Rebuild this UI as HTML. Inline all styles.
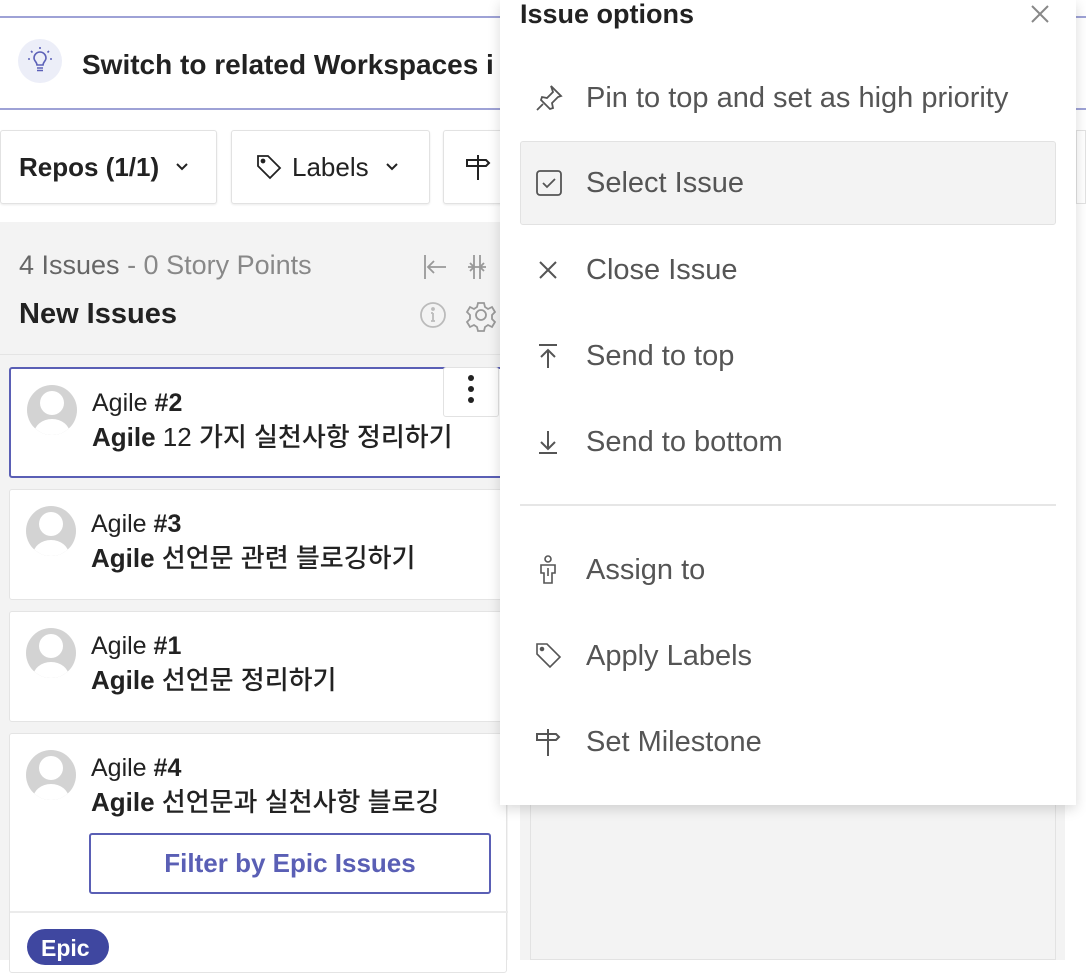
<!DOCTYPE html>
<html><head><meta charset="utf-8"><style>
*{box-sizing:border-box;margin:0;padding:0}
body{width:1086px;height:960px;overflow:hidden;background:#fff;font-family:"Liberation Sans","Noto Sans CJK KR",sans-serif;position:relative;color:#222}
.abs{position:absolute}
.banner{left:0;top:16px;width:1086px;height:94px;border-top:2px solid #9ea2d6;border-bottom:2px solid #9ea2d6;background:#fff}
.btn{top:130px;height:74px;background:#fff;border:1px solid #e2e2e2;border-radius:3px;box-shadow:0 1px 2px rgba(0,0,0,.08);font-size:26px;display:flex;align-items:center}
.col{left:0;top:222px;width:508px;height:738px;background:#f3f3f3}
.card{left:9px;width:498px;background:#fff;border:1px solid #e4e4e4;border-radius:3px}
.av{position:absolute;left:16px;top:16px;width:50px;height:50px;border-radius:50%;background:#d3d3d3;overflow:hidden}
.av:before{content:"";position:absolute;left:13px;top:6px;width:24px;height:24px;border-radius:50%;background:#fff;box-shadow:0 0 0 2px #d3d3d3}
.av:after{content:"";position:absolute;left:7px;top:34px;width:36px;height:30px;border-radius:50%;background:#fff}
.k{position:absolute;left:81px;top:18px;font-size:25px;color:#222;line-height:32px}
.t{position:absolute;left:81px;top:52px;font-size:26px;font-weight:500;color:#222;line-height:32px;white-space:nowrap}
.t b{font-weight:bold}
.menu{left:500px;top:0;width:576px;height:805px;background:#fff;box-shadow:0 4px 12px rgba(0,0,0,.15)}
.mi{position:absolute;left:20px;width:536px;height:84px;font-size:29px;color:#555;display:flex;align-items:center}
.mi svg{position:absolute;left:14px}
.mi span{position:absolute;left:66px}
</style></head><body>
<div class="abs banner">
 <div class="abs" style="left:18px;top:21px;width:44px;height:44px;border-radius:50%;background:#eceef8"></div>
 <svg class="abs" style="left:18px;top:21px" width="44" height="44" viewBox="0 0 44 44" fill="none" stroke="#5c61b8" stroke-width="1.6"><path d="M16 19a6 6 0 1 1 12 0c0 3-3 4-3 7h-6c0-3-3-4-3-7z"/><path d="M19 29h6M19 31.5h6"/><path d="M22 8v2M13 12l1.5 1.5M31 12l-1.5 1.5M10 20h2M32 20h2"/></svg>
 <div class="abs" style="left:82px;top:31px;font-size:28px;font-weight:bold;color:#222;white-space:nowrap">Switch to related Workspaces i</div>
</div>
<div class="abs btn" style="left:0;width:217px;padding-left:18px;font-weight:bold">Repos (1/1)<svg style="margin-left:16px" width="14" height="10" viewBox="0 0 14 10"><path d="M2 2l5 5 5-5" stroke="#222" stroke-width="2" fill="none"/></svg></div>
<div class="abs btn" style="left:231px;width:199px;padding-left:22px"><svg width="30" height="30" viewBox="0 0 30 30" fill="none" stroke="#222" stroke-width="1.8"><path d="M4 4h10l12 12-10 10L4 14z"/><circle cx="9" cy="9" r="1.5" fill="#222"/></svg><span style="margin-left:8px">Labels</span><svg style="margin-left:16px" width="14" height="10" viewBox="0 0 14 10"><path d="M2 2l5 5 5-5" stroke="#222" stroke-width="2" fill="none"/></svg></div>
<div class="abs btn" style="left:443px;width:80px;padding-left:20px"><svg width="30" height="30" viewBox="0 0 30 30" fill="none" stroke="#222" stroke-width="2"><path d="M14 3v25M3 8h19l3 3-3 3H3z"/></svg></div>
<div class="abs col">
 <div class="abs" style="left:19px;top:28px;font-size:27px;color:#888;white-space:nowrap"><span style="color:#666">4 Issues</span> - 0 Story Points</div>
 <div class="abs" style="left:19px;top:76px;font-size:29px;font-weight:bold;color:#222">New Issues</div>
 <svg class="abs" style="left:420px;top:30px" width="80" height="30" viewBox="0 0 80 30" fill="none" stroke="#999" stroke-width="1.8"><path d="M5 3v24M8 15h18M14 9l-6 6 6 6"/><path d="M54 3v24M60 3v24M48 15h18M50 11l4 4-4 4M64 11l-4 4 4 4"/></svg>
 <svg class="abs" style="left:418px;top:78px" width="90" height="32" viewBox="0 0 90 32" fill="none" stroke="#bbb" stroke-width="1.8"><circle cx="15" cy="15" r="12"/><path d="M15 13v8M13 21h4M13 13h2" stroke="#bbb"/><circle cx="15" cy="9" r="1" fill="#bbb"/><circle cx="63" cy="15" r="5" stroke="#999"/><path stroke="#999" d="M60 3h6l1 4 3 2 4-2 3 5-3 3v4l3 3-3 5-4-2-3 2-1 4h-6l-1-4-3-2-4 2-3-5 3-3v-4l-3-3 3-5 4 2 3-2z"/></svg>
 <div class="abs" style="left:0;top:132px;width:508px;height:1px;background:#e4e4e4"></div>
</div>
<div class="abs card" style="top:367px;height:111px;border:2px solid #5a5fb5"><div class="av"></div><div class="k">Agile <b>#2</b></div><div class="t"><b>Agile</b> 12 가지 실천사항 정리하기</div>
 <div class="abs" style="left:432px;top:-2px;width:56px;height:50px;background:#fff;border:1px solid #e2e2e2;border-radius:3px"><div class="abs" style="left:24px;top:7px;width:6px;height:6px;border-radius:50%;background:#222;box-shadow:0 11px 0 #222,0 22px 0 #222"></div></div></div>
<div class="abs card" style="top:489px;height:111px"><div class="av"></div><div class="k">Agile <b>#3</b></div><div class="t"><b>Agile</b> 선언문 관련 블로깅하기</div></div>
<div class="abs card" style="top:611px;height:111px"><div class="av"></div><div class="k">Agile <b>#1</b></div><div class="t"><b>Agile</b> 선언문 정리하기</div></div>
<div class="abs card" style="top:733px;height:240px"><div class="av"></div><div class="k">Agile <b>#4</b></div><div class="t"><b>Agile</b> 선언문과 실천사항 블로깅</div>
 <div class="abs" style="left:79px;top:99px;width:402px;height:61px;border:2px solid #5a5fb5;border-radius:3px;color:#5a5fb5;font-size:26px;font-weight:bold;display:flex;align-items:center;justify-content:center">Filter by Epic Issues</div>
 <div class="abs" style="left:0;top:177px;width:498px;height:2px;background:#ebebeb"></div>
 <div class="abs" style="left:17px;top:195px;width:82px;height:36px;border-radius:18px;background:#3f47a0;color:#fff;font-size:23px;font-weight:bold;padding:6px 0 0 14px">Epic</div>
</div>
<div class="abs" style="left:520px;top:222px;width:545px;height:738px;background:#f3f3f3"></div>
<div class="abs" style="left:530px;top:780px;width:526px;height:180px;background:#f3f3f3;border:1px solid #e2e2e2"></div>
<div class="abs" style="left:1076px;top:16px;width:10px;height:94px;background:#fff;border-top:2px solid #9ea2d6;border-bottom:2px solid #9ea2d6"></div>
<div class="abs" style="left:1076px;top:130px;width:10px;height:74px;background:#fff;border:1px solid #e2e2e2"></div>
<div class="abs menu">
 <div class="abs" style="left:20px;top:-1px;font-size:27px;font-weight:bold;color:#222">Issue options</div>
 <svg class="abs" style="left:530px;top:4px" width="20" height="20" viewBox="0 0 20 20" stroke="#888" stroke-width="2"><path d="M2 2l16 16M18 2L2 18"/></svg>
 <div class="mi" style="top:56px"><svg width="30" height="30" viewBox="0 0 30 30" fill="none" stroke="#555" stroke-width="1.8"><path d="M17 3l10 10-3 1-6 6 1 5-3 1-9-9 1-3 5 1 6-6z"/><path d="M9 21l-6 6"/></svg><span>Pin to top and set as high priority</span></div>
 <div class="mi" style="top:141px;background:#f3f3f3;border:1px solid #e2e2e2;border-radius:3px"><svg width="28" height="28" viewBox="0 0 28 28" fill="none" stroke="#555" stroke-width="1.8"><rect x="2" y="2" width="24" height="24" rx="3"/><path d="M8 14l4 4 8-8"/></svg><span style="left:65px">Select Issue</span></div>
 <div class="mi" style="top:228px"><svg width="28" height="28" viewBox="0 0 28 28" stroke="#555" stroke-width="2"><path d="M6 6l16 16M22 6L6 22"/></svg><span>Close Issue</span></div>
 <div class="mi" style="top:314px"><svg width="28" height="28" viewBox="0 0 28 28" fill="none" stroke="#555" stroke-width="2"><path d="M5 3h18M14 26V8M7 15l7-7 7 7"/></svg><span>Send to top</span></div>
 <div class="mi" style="top:400px"><svg width="28" height="28" viewBox="0 0 28 28" fill="none" stroke="#555" stroke-width="2"><path d="M5 25h18M14 3v18M7 14l7 7 7-7"/></svg><span>Send to bottom</span></div>
 <div class="abs" style="left:20px;top:504px;width:536px;height:2px;background:#e6e6e6"></div>
 <div class="mi" style="top:528px"><svg width="28" height="30" viewBox="0 0 28 30" fill="none" stroke="#555" stroke-width="1.6"><circle cx="14" cy="4" r="3"/><path d="M7 10h14v8h-3v10h-8V18H7z"/><path d="M14 13v8"/></svg><span>Assign to</span></div>
 <div class="mi" style="top:614px"><svg width="30" height="30" viewBox="0 0 30 30" fill="none" stroke="#555" stroke-width="1.6"><path d="M3 3h10l13 13-10 10L3 13z"/><circle cx="8" cy="8" r="1.5" fill="#555"/></svg><span>Apply Labels</span></div>
 <div class="mi" style="top:700px"><svg width="30" height="30" viewBox="0 0 30 30" fill="none" stroke="#555" stroke-width="2"><path d="M14 2v27M3 7h19l3 3-3 3H3z"/></svg><span>Set Milestone</span></div>
</div>
</body></html>
